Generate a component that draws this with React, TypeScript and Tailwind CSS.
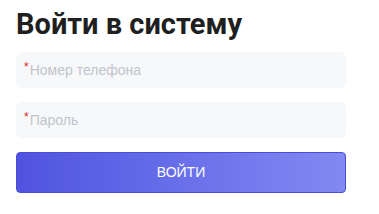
export default function App() {
  return (
    <div className="w-[379px] h-[214px] bg-white px-4 pt-[4px] font-['Liberation_Sans',Arial,sans-serif]">
      <h1 className="font-['Roboto',sans-serif] text-[29px] leading-[40px] font-bold text-[#1f1f1f]">Войти в систему</h1>
      <form className="mt-2 flex w-[330px] flex-col" onSubmit={(e) => e.preventDefault()}>
        <div className="flex h-9 items-center rounded-md bg-[#f7f8fa] pl-2">
          <span className="mr-[1px] self-start pt-[9px] text-[12px] leading-none text-[#e02424]">*</span>
          <input
            className="h-full flex-1 bg-transparent text-[14px] text-[#333] outline-none placeholder:text-[#c0c4cc]"
            placeholder="Номер телефона"
          />
        </div>
        <div className="mt-[14px] flex h-9 items-center rounded-md bg-[#f7f8fa] pl-2">
          <span className="mr-[1px] self-start pt-[9px] text-[12px] leading-none text-[#e02424]">*</span>
          <input
            type="password"
            className="h-full flex-1 bg-transparent text-[14px] text-[#333] outline-none placeholder:text-[#c0c4cc]"
            placeholder="Пароль"
          />
        </div>
        <button
          type="submit"
          className="mt-[14px] h-[41px] rounded border border-[#4b4dd4] bg-gradient-to-r from-[#5053e0] to-[#8389f2] text-[14px] text-white"
        >
          ВОЙТИ
        </button>
      </form>
    </div>
  );
}
